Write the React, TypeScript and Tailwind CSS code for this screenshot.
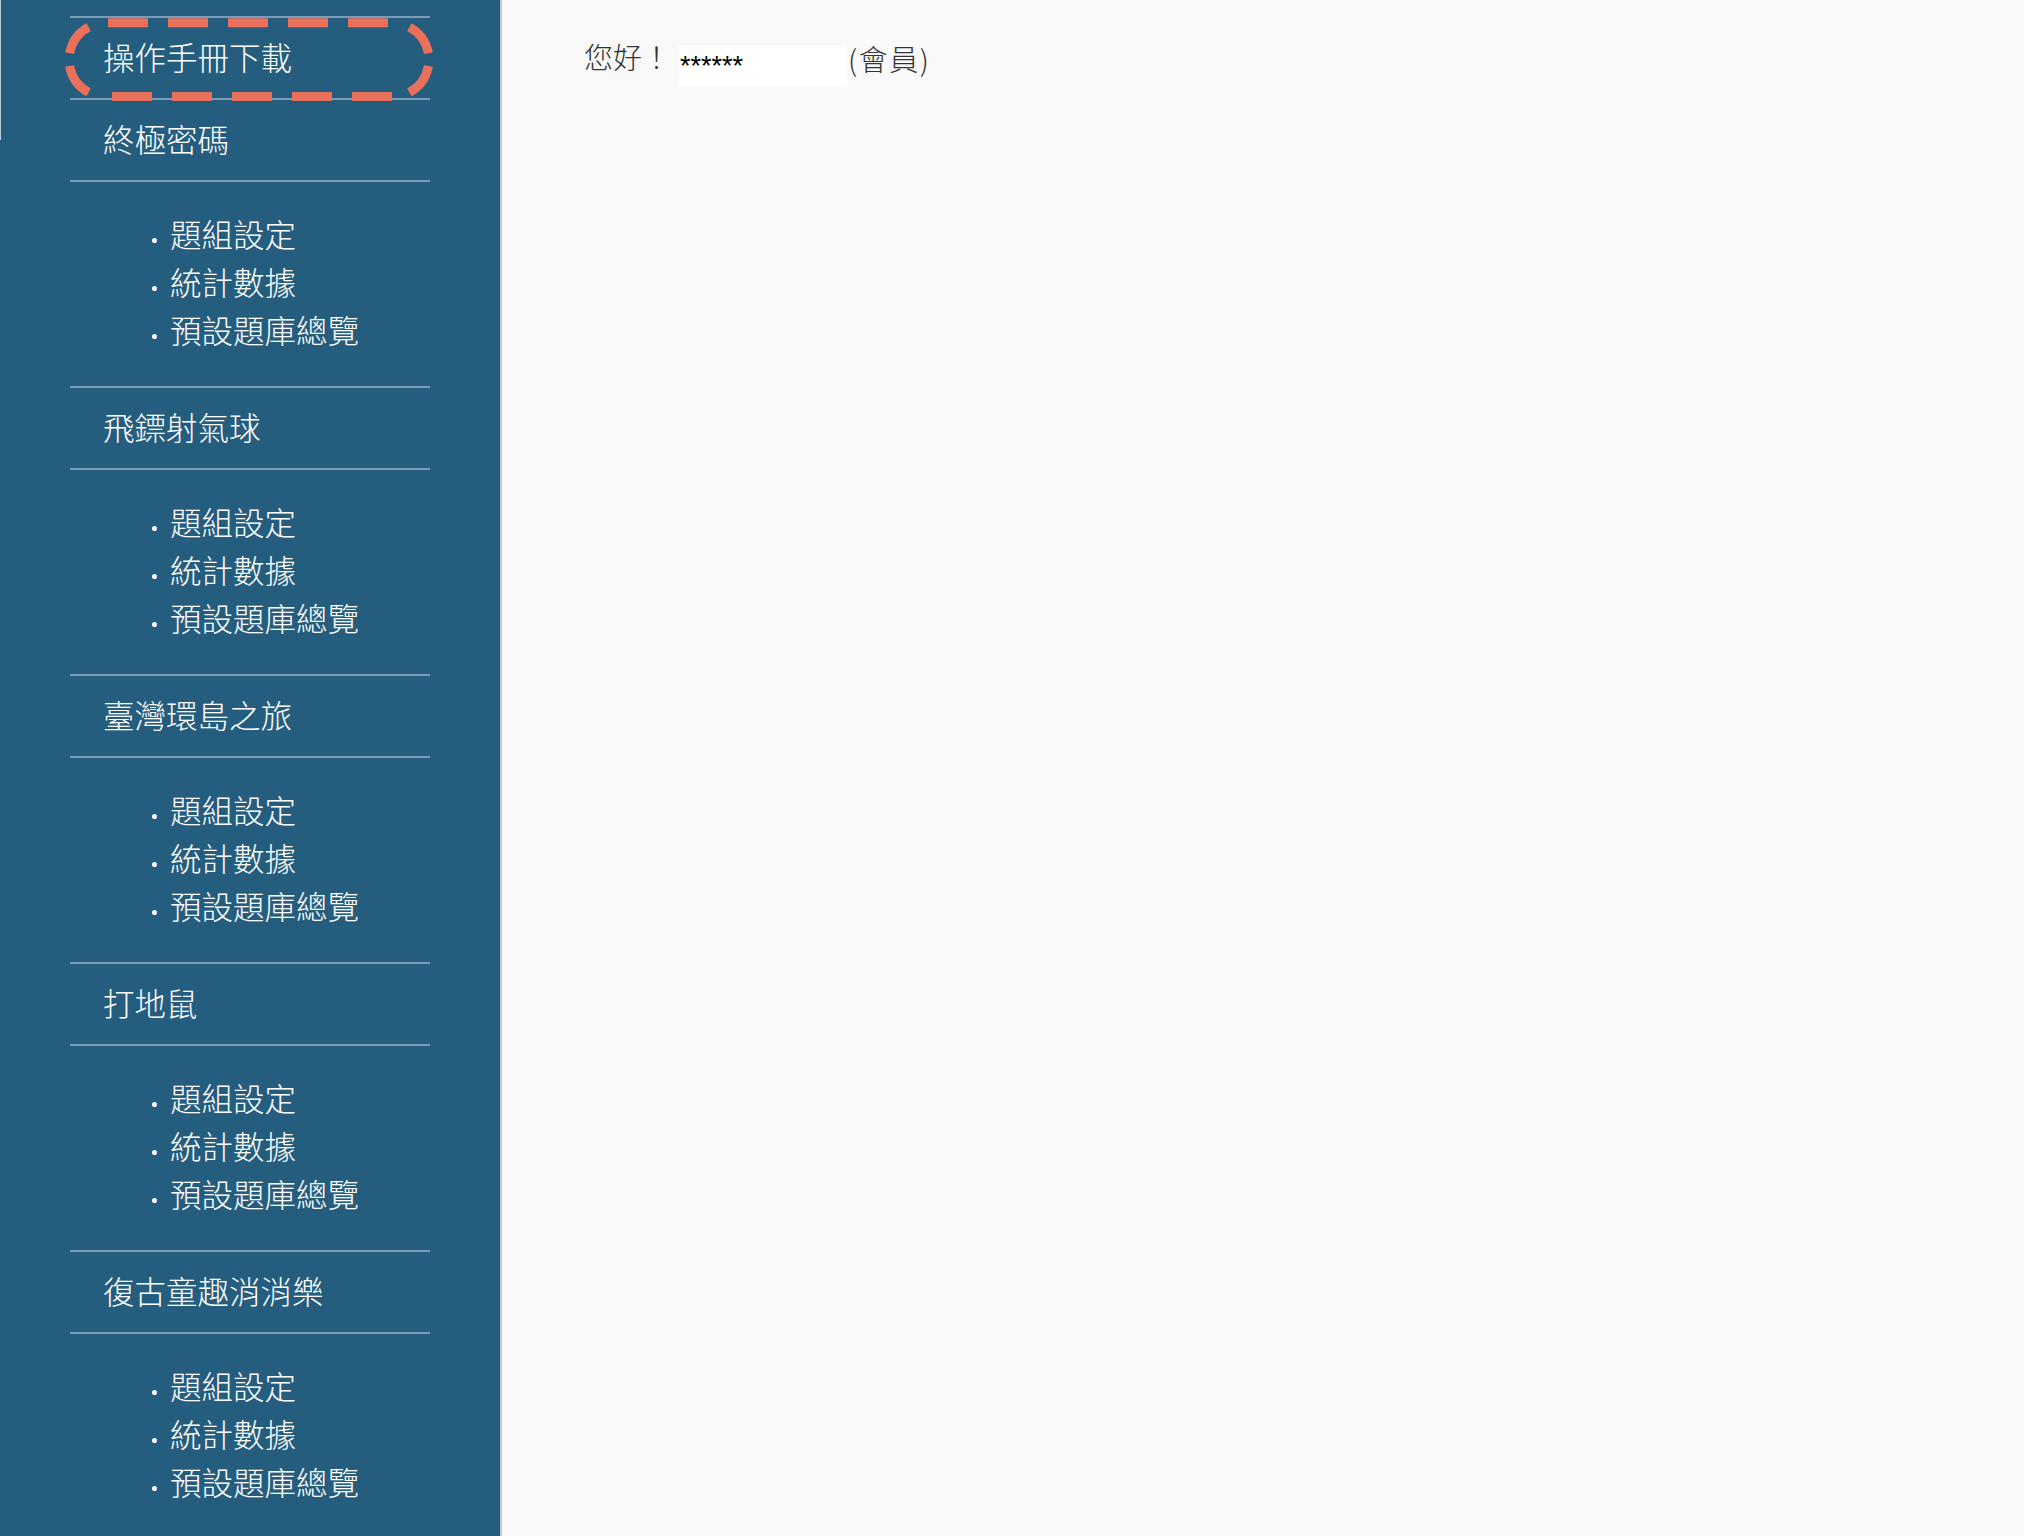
import React from "react";

const sections = ["終極密碼", "飛鏢射氣球", "臺灣環島之旅", "打地鼠", "復古童趣消消樂"];
const subs = ["題組設定", "統計數據", "預設題庫總覽"];

const cjk = { fontFamily: '"Noto Sans CJK TC", "Noto Sans", sans-serif' };

function Heading({ label }: { label: string }) {
  return (
    <div className="h-[82px] border-b-2 border-[#7d9cba] flex items-center pl-[33px] pb-[4px]">
      <span className="text-[31.5px] leading-[40px] text-white font-light">{label}</span>
    </div>
  );
}

function SubList() {
  return (
    <div className="h-[206px] border-b-2 border-[#7d9cba] pt-[27px]">
      {subs.map((s) => (
        <div key={s} className="h-[48px] flex items-center pl-[82px]">
          <span className="w-[5px] h-[5px] rounded-full bg-white mt-[14px] mr-[13px] shrink-0" />
          <span className="text-[31.5px] leading-[48px] text-white font-light">{s}</span>
        </div>
      ))}
    </div>
  );
}

export default function App() {
  return (
    <div className="flex min-h-[1536px] w-full" style={cjk}>
      <aside className="relative w-[502px] shrink-0 bg-[#255d7e] border-r-2 border-[#c9c9c9]">
        <div className="absolute left-0 top-0 w-px h-[140px] bg-white/70" />
        <div className="ml-[70px] w-[360px] pt-[16px]">
          <div className="border-t-2 border-[#7d9cba]">
            <Heading label="操作手冊下載" />
            {sections.map((s) => (
              <div key={s}>
                <Heading label={s} />
                <SubList />
              </div>
            ))}
          </div>
        </div>
        <svg
          className="absolute left-0 top-0 pointer-events-none"
          width="500"
          height="120"
          viewBox="0 0 500 120"
          fill="none"
          stroke="#e9705b"
          strokeWidth="9"
        >
          <line x1="108" y1="22.8" x2="148" y2="22.8" />
          <line x1="168" y1="22.8" x2="208" y2="22.8" />
          <line x1="228" y1="22.8" x2="268" y2="22.8" />
          <line x1="288" y1="22.8" x2="328" y2="22.8" />
          <line x1="348" y1="22.8" x2="388" y2="22.8" />
          <line x1="112" y1="96.6" x2="152" y2="96.6" />
          <line x1="172" y1="96.6" x2="212" y2="96.6" />
          <line x1="232" y1="96.6" x2="272" y2="96.6" />
          <line x1="292" y1="96.6" x2="332" y2="96.6" />
          <line x1="352" y1="96.6" x2="392" y2="96.6" />
          <path d="M88.6 27.1 A37 37 0 0 0 69.6 53.3" />
          <path d="M69.6 66.1 A37 37 0 0 0 88.6 92.4" />
          <path d="M409.4 27.1 A37 37 0 0 1 428.4 53.3" />
          <path d="M428.4 66.1 A37 37 0 0 1 409.4 92.4" />
        </svg>
      </aside>
      <main className="flex-1 bg-[#f9f9f9]">
        <div className="flex items-start pl-[82px] pt-[36px] text-[#333333]">
          <span className="text-[29px] leading-[40px] font-light">您好！</span>
          <span
            className="ml-[8px] mt-[9px] w-[168px] h-[42px] bg-white text-black text-[27px] leading-[42px] pl-[1px]"
            style={{ fontFamily: '"Liberation Sans", Arial, sans-serif' }}
          >
            ******
          </span>
          <span className="ml-[1px] text-[29px] leading-[40px] mt-[2px] font-light tracking-[1.5px]">(會員)</span>
        </div>
      </main>
    </div>
  );
}
